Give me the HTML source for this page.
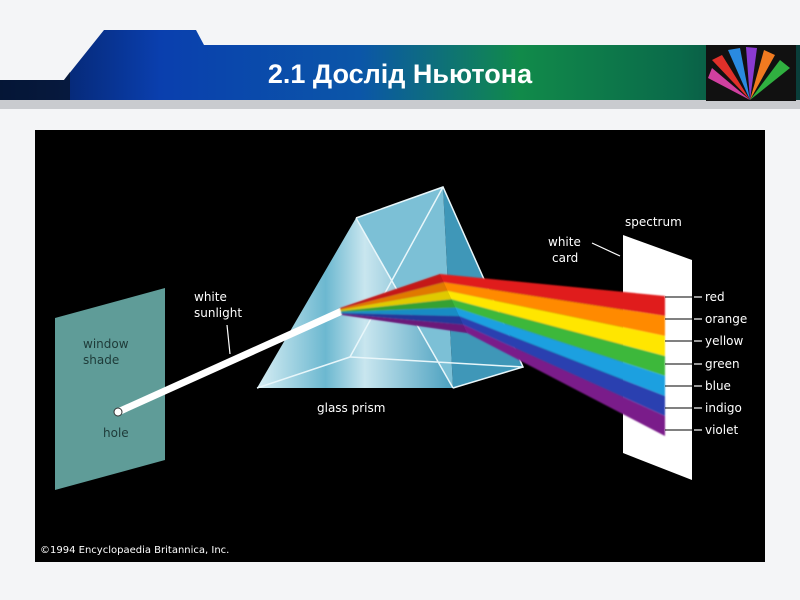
<!DOCTYPE html>
<html><head><meta charset="utf-8"><style>
body{margin:0;width:800px;height:600px;overflow:hidden;background:#f4f5f7;font-family:"Liberation Sans",sans-serif}
</style></head><body>
<svg width="800" height="600" style="position:absolute;left:0;top:0">
<defs>
<linearGradient id="band" x1="0" x2="1" y1="0" y2="0">
<stop offset="0" stop-color="#031a52"/><stop offset="0.2" stop-color="#0a3fae"/><stop offset="0.45" stop-color="#0b56a8"/><stop offset="0.65" stop-color="#118a4a"/><stop offset="0.85" stop-color="#0a6a4a"/><stop offset="1" stop-color="#0a3d3a"/></linearGradient>
<linearGradient id="glass" x1="0" x2="1" y1="0" y2="0">
<stop offset="0" stop-color="#d8eef4"/><stop offset="0.35" stop-color="#6cb8d0"/><stop offset="0.55" stop-color="#c9e6ef"/><stop offset="1" stop-color="#4aa0bf"/></linearGradient>
<filter id="bl"><feGaussianBlur stdDeviation="0.8"/></filter>
</defs>
<rect x="0" y="100" width="800" height="9" fill="#c9cbcf"/>
<polygon points="0,80 64,80 104,30 196,30 204,45 800,45 800,100 0,100" fill="url(#band)"/>
<polygon points="0,80 64,80 70,72 70,100 0,100" fill="#061530" opacity=".8"/>
<rect x="706" y="45" width="90" height="56" fill="#111"/>
<g>
<polygon points="750,100 712,60 722,55" fill="#e0302a"/>
<polygon points="750,100 728,50 740,48" fill="#2a8ae0"/>
<polygon points="750,100 746,47 757,48" fill="#8a3ad0"/>
<polygon points="750,100 764,50 775,55" fill="#f07a20"/>
<polygon points="750,100 780,60 790,68" fill="#30b040"/>
<polygon points="750,100 708,78 712,68" fill="#d040a0"/>
</g>
<text x="400" y="83" text-anchor="middle" font-family="Liberation Sans Narrow, Liberation Sans, sans-serif" font-weight="bold" font-size="27" fill="#fff">2.1 Дослід Ньютона</text>
<rect x="35" y="130" width="730" height="432" fill="#000"/>
<polygon points="55,318 165,288 165,460 55,490" fill="#5f9c98"/>
<polygon points="443,187 523,367 453,388" fill="#3f97b8"/>
<polygon points="356,218 443,187 453,388" fill="#7cc0d6"/>
<polygon points="356,218 257,388 453,388" fill="url(#glass)"/>
<g stroke="#e8f6fa" stroke-width="1.5" fill="none"><path d="M356,218 L453,388 M356,218 L443,187 L523,367 L453,388 M443,187 L350,357 L523,367 M350,357 L257,388"/></g>
<line x1="118" y1="412" x2="342" y2="311" stroke="#fff" stroke-width="7"/>
<circle cx="118" cy="412" r="4" fill="#fff" stroke="#333"/>
<polygon points="623,235 692,260 692,480 623,453" fill="#fff"/>
<g filter="url(#bl)">
<polygon points="340,308 440,274 665,296 665,316 443.9,282.4 340.3,309" fill="#e01a1a"/>
<polygon points="340.3,309 443.9,282.4 665,316 665,336 447.7,290.9 340.6,310" fill="#ff8a00"/>
<polygon points="340.6,310 447.7,290.9 665,336 665,356 451.6,299.3 340.9,311" fill="#ffe600"/>
<polygon points="340.9,311 451.6,299.3 665,356 665,376 455.4,307.7 341.1,312" fill="#3cb83a"/>
<polygon points="341.1,312 455.4,307.7 665,376 665,396 459.3,316.1 341.4,313" fill="#1aa0e0"/>
<polygon points="341.4,313 459.3,316.1 665,396 665,416 463.1,324.6 341.7,314" fill="#2a40b0"/>
<polygon points="341.7,314 463.1,324.6 665,416 665,436 467,333 342,315" fill="#7a1a8a"/>
</g>
<polygon points="340,308 440,274 467,333 342,315" fill="#000" opacity=".12"/>
<g stroke="#fff" stroke-width="1.2"><line x1="227" y1="325" x2="230" y2="354"/><line x1="592" y1="243" x2="620" y2="256"/></g>
<g font-family="DejaVu Sans, sans-serif" font-size="12" fill="#fff">
<text x="194" y="301">white</text><text x="194" y="317">sunlight</text>
<text x="548" y="246">white</text><text x="552" y="262">card</text>
<text x="625" y="226">spectrum</text>
<text x="317" y="412">glass prism</text>
<text x="83" y="348" fill="#1e3a38">window</text><text x="83" y="364" fill="#1e3a38">shade</text>
<text x="103" y="437" fill="#1e3a38">hole</text>
<text x="705" y="301">red</text><text x="705" y="323">orange</text><text x="705" y="345">yellow</text><text x="705" y="368">green</text><text x="705" y="390">blue</text><text x="705" y="412">indigo</text><text x="705" y="434">violet</text>
<text x="40" y="553" font-size="10">©1994 Encyclopaedia Britannica, Inc.</text>
</g>
<g stroke="#000" stroke-width="1"><line x1="665" y1="297" x2="692" y2="297"/><line x1="665" y1="319" x2="692" y2="319"/><line x1="665" y1="341" x2="692" y2="341"/><line x1="665" y1="364" x2="692" y2="364"/><line x1="665" y1="386" x2="692" y2="386"/><line x1="665" y1="408" x2="692" y2="408"/><line x1="665" y1="430" x2="692" y2="430"/></g>
<g stroke="#fff" stroke-width="1.2"><line x1="694" y1="297" x2="702" y2="297"/><line x1="694" y1="319" x2="702" y2="319"/><line x1="694" y1="341" x2="702" y2="341"/><line x1="694" y1="364" x2="702" y2="364"/><line x1="694" y1="386" x2="702" y2="386"/><line x1="694" y1="408" x2="702" y2="408"/><line x1="694" y1="430" x2="702" y2="430"/></g>
</svg>
</body></html>
